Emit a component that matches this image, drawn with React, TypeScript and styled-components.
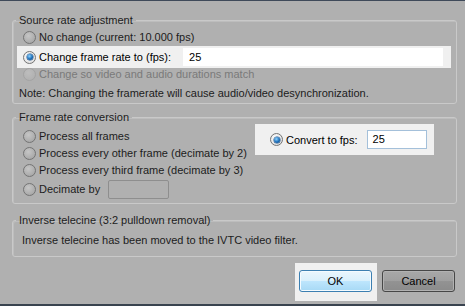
import React from "react";
import styled, { createGlobalStyle } from "styled-components";

const GlobalStyle = createGlobalStyle`
  html, body {
    margin: 0;
    padding: 0;
  }
  body {
    font-family: "Liberation Sans", Arial, sans-serif;
    font-size: 11px;
    color: #1c1c1c;
  }
`;

const Dialog = styled.div`
  box-sizing: border-box;
  width: 465px;
  height: 306px;
  display: flex;
  flex-direction: column;
  background: #b0b0b0;
  border-top: 1px solid #3f4a5a;
  border-bottom: 2px solid #39434f;
  overflow: hidden;
`;

const Group = styled.fieldset<{ $gap: number }>`
  margin: ${(p) => p.$gap}px 8px 0 12px;
  padding: 0;
  min-width: 0;
  border: 1px solid #c9c9c9;
  border-radius: 3px;
  box-shadow: inset 1px 1px 0 #bdbdbd;
`;

const Legend = styled.legend`
  margin-left: 3px;
  padding: 0 3px;
  line-height: 14px;
  height: 14px;
  color: #1c1c1c;
`;

const Row = styled.div<{ $h: number }>`
  display: flex;
  align-items: center;
  gap: 3px;
  height: ${(p) => p.$h}px;
  padding-left: 10px;
  line-height: ${(p) => p.$h}px;
  white-space: nowrap;
`;

const HighlightRow = styled.div`
  display: flex;
  align-items: center;
  gap: 3px;
  height: 22px;
  margin: 0 5px 0 4px;
  padding-left: 6px;
  background: #f0f0f0;
  color: #000;
  white-space: nowrap;
`;

const Label = styled.span<{ $disabled?: boolean }>`
  color: ${(p) => (p.$disabled ? "#7a7a7a" : "inherit")};
`;

const Radio = styled.span<{ $checked?: boolean; $disabled?: boolean }>`
  position: relative;
  box-sizing: border-box;
  flex: none;
  width: 13px;
  height: 13px;
  border-radius: 50%;
  border: 1px solid ${(p) => (p.$disabled ? "#a3a3a3" : "#747474")};
  background: ${(p) =>
    p.$disabled
      ? "radial-gradient(circle at 40% 35%, #bdbdbd, #adadad)"
      : p.$checked
      ? "radial-gradient(circle at 40% 35%, #ffffff, #d6d6d6)"
      : "radial-gradient(circle at 40% 35%, #c6c6c6, #9f9f9f)"};
  &::after {
    content: "";
    display: ${(p) => (p.$checked ? "block" : "none")};
    position: absolute;
    left: 2.5px;
    top: 2.5px;
    width: 6px;
    height: 6px;
    border-radius: 50%;
    background: radial-gradient(circle at 40% 35%, #8fd3ff, #1a6db8 55%, #0c3f78);
    box-shadow: 0 0 0 0.5px #1d4f86;
  }
`;

const FpsInput = styled.div<{ $w: number; $h: number; $variant: "plain" | "blue" | "disabled" }>`
  box-sizing: border-box;
  width: ${(p) => p.$w}px;
  height: ${(p) => p.$h}px;
  line-height: ${(p) => p.$h - 2}px;
  padding-left: 5px;
  color: #000;
  background: ${(p) => (p.$variant === "disabled" ? "#b0b0b0" : "#fff")};
  border: 1px solid
    ${(p) =>
      p.$variant === "blue" ? "#a4c0da" : p.$variant === "disabled" ? "#8e8e8e" : "#fff"};
  border-radius: ${(p) => (p.$variant === "disabled" ? "2px" : "0")};
`;

const ConversionBody = styled.div`
  display: flex;
  align-items: flex-start;
`;

const Column = styled.div`
  display: flex;
  flex-direction: column;
  padding-top: 3px;
  padding-bottom: 4px;
`;

const ConvertPanel = styled.div`
  display: flex;
  align-items: center;
  gap: 3px;
  margin-left: auto;
  margin-right: 22px;
  width: 179px;
  height: 31px;
  box-sizing: border-box;
  padding-left: 15px;
  background: #f0f0f0;
  color: #000;
  white-space: nowrap;
`;

const Note = styled.div`
  height: 18px;
  line-height: 18px;
  margin: 3px 0 1px 6px;
`;

const InfoText = styled.div`
  height: 18px;
  line-height: 18px;
  padding: 4px 0 7px 9px;
`;

const ButtonBar = styled.div`
  display: flex;
  justify-content: flex-end;
  align-items: flex-start;
  gap: 5px;
  margin-top: 6px;
  padding-right: 10px;
`;

const ButtonSpot = styled.div`
  padding: 7px 5px 9px 4px;
  background: #f0f0f0;
`;

const DialogButton = styled.div<{ $primary?: boolean }>`
  box-sizing: border-box;
  width: 73px;
  height: 22px;
  line-height: 20px;
  text-align: center;
  border-radius: 3px;
  color: #000;
  border: 1px solid ${(p) => (p.$primary ? "#3c7fb1" : "#474747")};
  background: ${(p) =>
    p.$primary
      ? "linear-gradient(#eaf6fd, #d9f0fc 50%, #bee6fd 50%, #a7d9f5)"
      : "linear-gradient(#a8a8a8, #9f9f9f 50%, #939393 50%, #8b8b8b)"};
  box-shadow: inset 0 0 0 1px ${(p) => (p.$primary ? "#f4fbff" : "#b2b2b2")};
  margin-top: ${(p) => (p.$primary ? "0" : "7px")};
`;

export default function App() {
  return (
    <>
      <GlobalStyle />
      <Dialog>
        <Group $gap={12}>
          <Legend>Source rate adjustment</Legend>
          <Row $h={18} style={{ marginTop: 1 }}>
            <Radio />
            <Label>No change (current: 10.000 fps)</Label>
          </Row>
          <HighlightRow>
            <Radio $checked />
            <Label>Change frame rate to (fps):</Label>
            <FpsInput $w={260} $h={18} $variant="plain" style={{ marginLeft: 9 }}>
              25
            </FpsInput>
          </HighlightRow>
          <Row $h={13}>
            <Radio $disabled />
            <Label $disabled>Change so video and audio durations match</Label>
          </Row>
          <Note>Note: Changing the framerate will cause audio/video desynchronization.</Note>
        </Group>

        <Group $gap={6}>
          <Legend>Frame rate conversion</Legend>
          <ConversionBody>
            <Column>
              <Row $h={18}>
                <Radio />
                <Label>Process all frames</Label>
              </Row>
              <Row $h={17}>
                <Radio />
                <Label>Process every other frame (decimate by 2)</Label>
              </Row>
              <Row $h={17}>
                <Radio />
                <Label>Process every third frame (decimate by 3)</Label>
              </Row>
              <Row $h={20}>
                <Radio />
                <Label>Decimate by</Label>
                <FpsInput $w={61} $h={19} $variant="disabled" style={{ marginLeft: 5 }} />
              </Row>
            </Column>
            <ConvertPanel>
              <Radio $checked />
              <Label>Convert to fps:</Label>
              <FpsInput $w={60} $h={19} $variant="blue" style={{ marginLeft: 6 }}>
                25
              </FpsInput>
            </ConvertPanel>
          </ConversionBody>
        </Group>

        <Group $gap={9}>
          <Legend>Inverse telecine (3:2 pulldown removal)</Legend>
          <InfoText>Inverse telecine has been moved to the IVTC video filter.</InfoText>
        </Group>

        <ButtonBar>
          <ButtonSpot>
            <DialogButton $primary>OK</DialogButton>
          </ButtonSpot>
          <DialogButton>Cancel</DialogButton>
        </ButtonBar>
      </Dialog>
    </>
  );
}
